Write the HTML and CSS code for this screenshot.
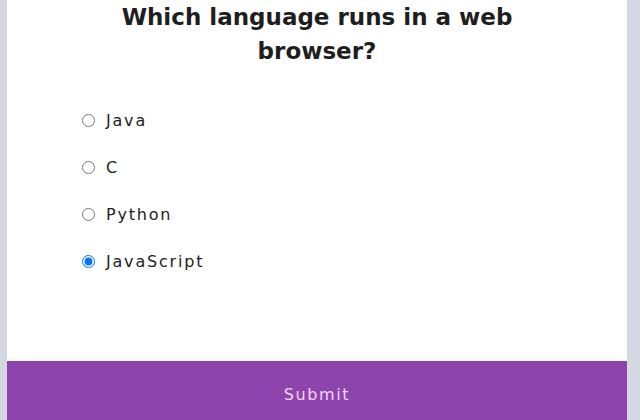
FILE: index.html
```html
<!DOCTYPE html>
<html lang="en">
<head>
<meta charset="utf-8">
<title>Quiz</title>
<link rel="stylesheet" href="styles.css">
</head>
<body>
<div class="quiz">
  <div class="quiz-header">
    <h2 class="question">Which language runs in a web browser?</h2>
    <ul class="answers">
      <li class="answer"><input type="radio" name="answer" id="a"><label for="a">Java</label></li>
      <li class="answer"><input type="radio" name="answer" id="b"><label for="b">C</label></li>
      <li class="answer"><input type="radio" name="answer" id="c"><label for="c">Python</label></li>
      <li class="answer"><input type="radio" name="answer" id="d" checked><label for="d">JavaScript</label></li>
    </ul>
  </div>
  <button class="submit">Submit</button>
</div>
</body>
</html>
```

FILE: styles.css
```css
html, body {
  margin: 0;
  height: 100%;
  overflow: hidden;
}
body {
  background: #d4d8e2;
  font-family: "DejaVu Sans", sans-serif;
}
.quiz {
  margin-left: 7px;
  width: 620px;
  background: #ffffff;
}
.quiz-header {
  padding: 0 0 88px;
}
.question {
  margin: 0;
  padding: 0 90px;
  text-align: center;
  font-size: 23px;
  line-height: 34px;
  font-weight: 700;
  color: #1e1e1e;
}
.answers {
  list-style: none;
  margin: 40px 0 0;
  padding: 0 0 0 75px;
}
.answer {
  display: flex;
  align-items: center;
  height: 24px;
  margin-bottom: 23px;
  font-size: 16px;
  letter-spacing: 1.8px;
  color: #222222;
}
.answer:last-child {
  margin-bottom: 0;
}
.answer input {
  margin: 0 11px 0 0;
  width: 13px;
  height: 13px;
}
.submit {
  display: block;
  width: 100%;
  border: none;
  background: #8e44ad;
  color: #f2d6f5;
  font-family: inherit;
  font-size: 16px;
  letter-spacing: 1.6px;
  line-height: 20px;
  padding: 24px 0;
}
```
